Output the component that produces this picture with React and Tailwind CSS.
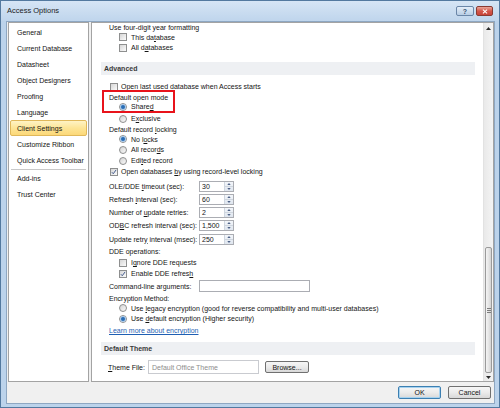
import { useState } from "react";

const navItems = [
  "General",
  "Current Database",
  "Datasheet",
  "Object Designers",
  "Proofing",
  "Language",
  "Client Settings",
  "Customize Ribbon",
  "Quick Access Toolbar",
];

function U({ children }) {
  return <span className="underline decoration-[0.5px] underline-offset-[1px]">{children}</span>;
}

function Check({ checked }) {
  return (
    <span className="relative flex h-[8px] w-[8px] shrink-0 items-center justify-center border border-[#8e8f8f] bg-linear-to-br from-[#d6d6d6] to-[#fbfbfb]">
      {checked && (
        <svg viewBox="0 0 8 8" className="absolute left-0 top-0 h-[6px] w-[6px]">
          <path d="M1.2 4.3 L3 6.3 L6.8 1.2" fill="none" stroke="#344e86" strokeWidth="1.2" />
        </svg>
      )}
    </span>
  );
}

function Radio({ checked }) {
  return (
    <span className="flex h-[8px] w-[8px] shrink-0 items-center justify-center rounded-full border border-[#8e8f8f] bg-linear-to-br from-[#d4d4d4] to-[#fafafa]">
      {checked && <span className="h-[4px] w-[4px] rounded-full bg-[#2a6db5] shadow-[0_0_0_1px_#a9c9ea]" />}
    </span>
  );
}

function Tri({ down }) {
  return (
    <svg viewBox="0 0 5 3" className="h-[3px] w-[5px]">
      <path d={down ? "M0 0 H5 L2.5 3 Z" : "M0 3 H5 L2.5 0 Z"} fill="#2b2b2b" />
    </svg>
  );
}

function Spin({ value }) {
  return (
    <div className="flex h-[11px] w-[35px] border border-[#abadb3] bg-white">
      <span className="flex flex-1 items-center pl-[2px]">{value}</span>
      <div className="flex w-[9px] flex-col border-l border-[#cfd6df] bg-linear-to-b from-[#f3f6fa] to-[#dfe6ef]">
        <div className="flex flex-1 items-center justify-center border-b border-[#cfd6df]">
          <svg viewBox="0 0 5 3" className="h-[2px] w-[4px]">
            <path d="M0 3 H5 L2.5 0 Z" fill="#4b5f85" />
          </svg>
        </div>
        <div className="flex flex-1 items-center justify-center">
          <svg viewBox="0 0 5 3" className="h-[2px] w-[4px]">
            <path d="M0 0 H5 L2.5 3 Z" fill="#4b5f85" />
          </svg>
        </div>
      </div>
    </div>
  );
}

function Header({ children }) {
  return (
    <div className="flex h-[13px] items-center bg-[#eef0f3] pl-[3px] font-bold text-[#3a3a3a]">
      {children}
    </div>
  );
}

function SpinRow({ label, value, h = "h-[13px]" }) {
  return (
    <div className={`flex ${h} items-center pl-[8px]`}>
      <span className="w-[90px]">{label}</span>
      <Spin value={value} />
    </div>
  );
}

function Button({ children, focused, w = "w-[43px]", h = "h-[13px]" }) {
  return (
    <div
      className={`flex ${w} ${h} items-center justify-center rounded-[2px] border bg-linear-to-b from-[#f6f6f6] via-[#ebebeb] to-[#d8d8d8] ${
        focused ? "border-[#3c7fb1] shadow-[inset_0_0_0_1px_#a6d2f0]" : "border-[#707070]"
      }`}
    >
      {children}
    </div>
  );
}

export default function App() {
  const [active, setActive] = useState("Client Settings");

  return (
    <div className="flex h-[408px] w-[500px] flex-col border border-[#53799f] bg-[#bcd3eb] font-['Liberation_Sans',Arial,sans-serif] text-[7px] leading-none text-[#141414]">
      {/* title bar */}
      <div className="flex h-[20px] items-center bg-linear-to-b from-[#d6e5f5] to-[#bfd5ec] pl-[6px] pr-[6px]">
        <span className="flex-1 text-[7.5px] text-[#1b1b1b]">Access Options</span>
        <div className="flex gap-[2px]">
          <div className="flex h-[10px] w-[18px] items-center justify-center rounded-[2px] border border-[#6a86a8] bg-linear-to-b from-[#e4eef9] to-[#b8cde4] text-[7px] font-bold text-[#35506f]">
            ?
          </div>
          <div className="flex h-[10px] w-[17px] items-center justify-center rounded-[2px] border border-[#8a3a32] bg-linear-to-b from-[#e9a79b] via-[#d3564a] to-[#c8443a]">
            <svg viewBox="0 0 7 6" className="h-[5px] w-[6px]">
              <path d="M1 0.8 L6 5.2 M6 0.8 L1 5.2" stroke="#fff" strokeWidth="1.3" />
            </svg>
          </div>
        </div>
      </div>

      {/* client area */}
      <div className="mb-[3px] ml-[5px] mr-[4px] flex flex-1 flex-col border border-[#8ea7c2] bg-[#f0f0f0] pl-[1px]">
        <div className="flex h-[360px] gap-[2px]">
          {/* left nav */}
          <div className="flex w-[81px] flex-col border border-[#a3a3a3] bg-white px-[1px] pt-[1px]">
            {navItems.map((item) => (
              <div
                key={item}
                onClick={() => setActive(item)}
                className={`flex h-[16px] shrink-0 cursor-pointer items-center pl-[6px] ${
                  active === item
                    ? "rounded-[2px] border border-[#e0b85a] bg-linear-to-b from-[#fff3c4] via-[#fde596] to-[#fcd878]"
                    : "border border-transparent"
                }`}
              >
                {item}
              </div>
            ))}
            <div className="mx-[1px] mt-[1px] h-px bg-[#c8c8c8]" />
            {["Add-ins", "Trust Center"].map((item) => (
              <div
                key={item}
                onClick={() => setActive(item)}
                className={`flex h-[16px] shrink-0 cursor-pointer items-center pl-[6px] ${
                  active === item
                    ? "rounded-[2px] border border-[#e0b85a] bg-linear-to-b from-[#fff3c4] via-[#fde596] to-[#fcd878]"
                    : "border border-transparent"
                }`}
              >
                {item}
              </div>
            ))}
          </div>

          {/* right panel */}
          <div className="flex flex-1 border border-[#a3a3a3] bg-white">
            <div className="flex flex-1 flex-col overflow-hidden pl-[9px] pr-[8px]">
              <div className="flex h-[9px] items-center pl-[8px]">Use four-digit year formatting</div>
              <div className="flex h-[10px] items-center gap-[4px] pl-[18px]">
                <Check />
                <span>
                  This da<U>t</U>abase
                </span>
              </div>
              <div className="flex h-[11px] items-center gap-[4px] pl-[18px]">
                <Check />
                <span>
                  All d<U>a</U>tabases
                </span>
              </div>

              <div className="mt-[9px]">
                <Header>Advanced</Header>
              </div>

              <div className="mt-[6px] flex h-[11px] items-center gap-[3px] pl-[9px]">
                <Check />
                <span>
                  Open <U>l</U>ast used database when Access starts
                </span>
              </div>

              <div className="relative">
                <div className="flex h-[10px] items-center pl-[8px]">Default open mode</div>
                <div className="flex h-[9px] items-center gap-[4px] pl-[18px]">
                  <Radio checked />
                  <span>
                    Share<U>d</U>
                  </span>
                </div>
                <div className="absolute left-[1px] top-[-2px] h-[23px] w-[73px] border-2 border-[#e8131b]" />
              </div>

              <div className="mt-[2px] flex h-[11px] items-center gap-[4px] pl-[18px]">
                <Radio />
                <span>
                  E<U>x</U>clusive
                </span>
              </div>
              <div className="flex h-[10px] items-center pl-[8px]">
                <span>
                  Default record <U>l</U>ocking
                </span>
              </div>
              <div className="flex h-[10px] items-center gap-[4px] pl-[18px]">
                <Radio checked />
                <span>
                  No l<U>o</U>cks
                </span>
              </div>
              <div className="flex h-[11px] items-center gap-[4px] pl-[18px]">
                <Radio />
                <span>
                  All recor<U>d</U>s
                </span>
              </div>
              <div className="flex h-[11px] items-center gap-[4px] pl-[18px]">
                <Radio />
                <span>
                  Edi<U>t</U>ed record
                </span>
              </div>
              <div className="flex h-[11px] items-center gap-[3px] pl-[9px]">
                <Check checked />
                <span>
                  Open databases <U>b</U>y using record-level locking
                </span>
              </div>

              <div className="mt-[3px]">
                <SpinRow
                  label={
                    <>
                      OLE/DDE <U>t</U>imeout (sec):
                    </>
                  }
                  value="30"
                />
                <SpinRow
                  label={
                    <>
                      Refresh <U>i</U>nterval (sec):
                    </>
                  }
                  value="60"
                />
                <SpinRow
                  label={
                    <>
                      Number of <U>u</U>pdate retries:
                    </>
                  }
                  value="2"
                />
                <SpinRow
                  label={
                    <>
                      OD<U>B</U>C refresh interval (sec):
                    </>
                  }
                  value="1,500"
                />
                <SpinRow
                  label={
                    <>
                      Update retr<U>y</U> interval (msec):
                    </>
                  }
                  value="250"
                  h="h-[14px]"
                />
              </div>

              <div className="flex h-[11px] items-center pl-[8px]">DDE operations:</div>
              <div className="flex h-[11px] items-center gap-[4px] pl-[18px]">
                <Check />
                <span>
                  I<U>g</U>nore DDE requests
                </span>
              </div>
              <div className="flex h-[11px] items-center gap-[4px] pl-[18px]">
                <Check checked />
                <span>
                  Enable DDE refres<U>h</U>
                </span>
              </div>
              <div className="flex h-[14px] items-center pl-[8px]">
                <span className="w-[90px]">Command-line arguments:</span>
                <div className="h-[12px] w-[111px] border border-[#abadb3] bg-white" />
              </div>
              <div className="flex h-[10px] items-center pl-[8px]">Encryption Method:</div>
              <div className="flex h-[10px] items-center gap-[4px] pl-[18px]">
                <Radio />
                <span>
                  Use <U>l</U>egacy encryption (good for reverse compatibility and multi-user databases)
                </span>
              </div>
              <div className="flex h-[11px] items-center gap-[4px] pl-[18px]">
                <Radio checked />
                <span>
                  Use <U>d</U>efault encryption (Higher security)
                </span>
              </div>
              <div className="flex h-[13px] items-center pl-[8px]">
                <span className="cursor-pointer text-[#1f5fb3] underline decoration-[0.5px] underline-offset-[1px]">
                  Learn more about encryption
                </span>
              </div>

              <div className="mt-[5px]">
                <Header>Default Theme</Header>
              </div>

              <div className="mt-[5px] flex h-[14px] items-center pl-[7px]">
                <span className="w-[40px]">
                  <U>T</U>heme File:
                </span>
                <div className="flex h-[14px] w-[111px] items-center border border-[#c9cbd0] bg-white pl-[3px] text-[#8d8d8d]">
                  Default Office Theme
                </div>
                <div className="ml-[6px]">
                  <Button w="w-[44px]" h="h-[12px]">
                    Browse...
                  </Button>
                </div>
              </div>
            </div>

            {/* scrollbar */}
            <div className="flex w-[10px] flex-col border-l border-[#e2e2e2] bg-linear-to-r from-[#e9e9e9] to-[#f4f4f4]">
              <div className="flex h-[11px] items-center justify-center">
                <Tri />
              </div>
              <div className="flex-1" />
              <div className="mx-[1px] flex h-[126px] items-center justify-center rounded-[2px] border border-[#9a9a9a] bg-linear-to-r from-[#f4f4f4] via-[#e6e6e6] to-[#d3d3d3]">
                <div className="flex w-[4px] flex-col gap-[1px]">
                  <div className="h-px bg-[#7d7d7d]" />
                  <div className="h-px bg-[#7d7d7d]" />
                  <div className="h-px bg-[#7d7d7d]" />
                </div>
              </div>
              <div className="flex h-[8px] items-center justify-center">
                <Tri down />
              </div>
            </div>
          </div>
        </div>

        {/* buttons */}
        <div className="mt-[4px] flex h-[13px] justify-end gap-[7px] pr-[3px]">
          <Button focused>OK</Button>
          <Button>Cancel</Button>
        </div>
      </div>
    </div>
  );
}
